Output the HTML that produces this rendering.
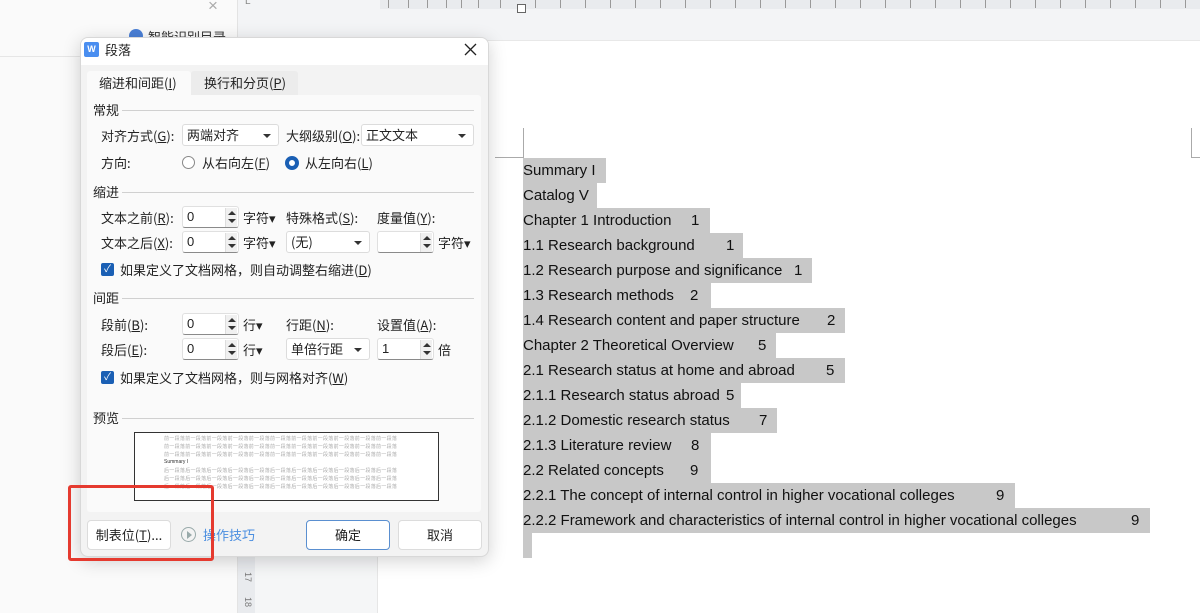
<!DOCTYPE html>
<html><head><meta charset="utf-8"><style>
*{margin:0;padding:0;box-sizing:border-box}
body{width:1200px;height:613px;overflow:hidden;background:#fff;position:relative;font-family:"Liberation Sans","Noto Sans CJK SC",sans-serif;font-size:13px;color:#222}
.a{position:absolute}
.cn{font-family:"Noto Sans CJK SC","WenQuanYi Zen Hei",sans-serif}
.row{position:absolute;left:523px;height:25px;background:#c8c8c8;font-size:15px;line-height:26px;color:#111;white-space:nowrap}
.row span{position:absolute;top:0}
.lbl{position:absolute;font-size:13px;line-height:18px;white-space:nowrap}
.inp{position:absolute;height:22px;background:#fff;border:1px solid #e0e0e0;border-bottom:1px solid #8a8a8a;border-radius:3px;font-size:13px;line-height:20px;padding-left:4px}
.sel{position:absolute;height:22px;background:#fff;border:1px solid #dcdcdc;border-radius:3px;font-size:13px;line-height:20px;padding-left:4px}
.sel:after{content:"";position:absolute;right:7px;top:9px;border-left:4px solid transparent;border-right:4px solid transparent;border-top:4px solid #333}
.spin{position:absolute;right:1px;top:1px;width:12px;height:19px;background:#f0f0f0;border-left:1px solid #ddd}
.spin:before{content:"";position:absolute;left:2px;top:3px;border-left:4px solid transparent;border-right:4px solid transparent;border-bottom:4px solid #333}
.spin:after{content:"";position:absolute;left:2px;top:11px;border-left:4px solid transparent;border-right:4px solid transparent;border-top:4px solid #333}
.sec{position:absolute;left:93px;font-size:13px;line-height:16px}
.line{position:absolute;height:1px;background:#d0d0d0}
.chk{position:absolute;width:13px;height:13px;background:#1a5fb4;border-radius:2px;color:#fff;font-size:10px;line-height:13px;text-align:center}
.btn{position:absolute;height:30px;background:#fff;border:1px solid #dcdcdc;border-radius:4px;font-size:13px;line-height:28px;text-align:center}
.pv{font-size:5px;color:#aaa;line-height:8px;white-space:nowrap;letter-spacing:.3px}
</style></head><body>
<div class="a" style="left:0;top:0;width:237px;height:613px;background:#fafafa"></div>
<div class="a" style="left:0;top:56px;width:237px;height:1px;background:#e6e6e6"></div>
<div class="a" style="left:208px;top:-4px;font-size:17px;color:#aaa">×</div>
<div class="a" style="left:129px;top:29px;width:14px;height:14px;border-radius:7px;background:#4a7fd6"></div>
<div class="a cn" style="left:148px;top:27px;font-size:13px;color:#333">智能识别目录</div>
<div class="a" style="left:237px;top:0;width:1px;height:613px;background:#e3e3e3"></div>
<div class="a" style="left:238px;top:0;width:962px;height:40px;background:#f3f4f6"></div>
<div class="a" style="left:238px;top:40px;width:962px;height:1px;background:#e8e8e8"></div>
<div class="a" style="left:380px;top:0;width:820px;height:9px;background:#e9ebee"></div>
<div class="a" style="left:245px;top:-4px;font-size:10px;color:#888">L</div>
<svg class="a" style="left:380px;top:0" width="820" height="10">
<g stroke="#999" stroke-width="1">
<line x1="8.5" y1="0" x2="8.5" y2="8"/><line x1="28.5" y1="0" x2="28.5" y2="8"/><line x1="47.5" y1="0" x2="47.5" y2="8"/><line x1="66.5" y1="0" x2="66.5" y2="8"/><line x1="81.5" y1="0" x2="81.5" y2="8"/><line x1="98.5" y1="0" x2="98.5" y2="8"/><line x1="120.5" y1="0" x2="120.5" y2="8"/><line x1="155.5" y1="0" x2="155.5" y2="8"/><line x1="180.5" y1="0" x2="180.5" y2="8"/><line x1="205.5" y1="0" x2="205.5" y2="8"/><line x1="230.5" y1="0" x2="230.5" y2="8"/><line x1="255.5" y1="0" x2="255.5" y2="8"/><line x1="280.5" y1="0" x2="280.5" y2="8"/><line x1="305.5" y1="0" x2="305.5" y2="8"/><line x1="330.5" y1="0" x2="330.5" y2="8"/><line x1="355.5" y1="0" x2="355.5" y2="8"/><line x1="380.5" y1="0" x2="380.5" y2="8"/><line x1="405.5" y1="0" x2="405.5" y2="8"/><line x1="430.5" y1="0" x2="430.5" y2="8"/><line x1="455.5" y1="0" x2="455.5" y2="8"/><line x1="480.5" y1="0" x2="480.5" y2="8"/><line x1="505.5" y1="0" x2="505.5" y2="8"/><line x1="530.5" y1="0" x2="530.5" y2="8"/><line x1="555.5" y1="0" x2="555.5" y2="8"/><line x1="580.5" y1="0" x2="580.5" y2="8"/><line x1="605.5" y1="0" x2="605.5" y2="8"/><line x1="630.5" y1="0" x2="630.5" y2="8"/><line x1="655.5" y1="0" x2="655.5" y2="8"/><line x1="680.5" y1="0" x2="680.5" y2="8"/><line x1="705.5" y1="0" x2="705.5" y2="8"/><line x1="730.5" y1="0" x2="730.5" y2="8"/><line x1="755.5" y1="0" x2="755.5" y2="8"/><line x1="780.5" y1="0" x2="780.5" y2="8"/><line x1="805.5" y1="0" x2="805.5" y2="8"/>
</g></svg>
<div class="a" style="left:517px;top:4px;width:9px;height:9px;border:1px solid #666;background:#fff"></div>
<div class="a" style="left:238px;top:41px;width:17px;height:572px;background:#e9ebee"></div>
<div class="a" style="left:255px;top:41px;width:123px;height:572px;background:#f5f6f7"></div>
<div class="a" style="left:377px;top:41px;width:1px;height:572px;background:#e6e6e6"></div>
<div class="a" style="left:243px;top:572px;font-size:9px;color:#777;transform:rotate(90deg)">17</div>
<div class="a" style="left:243px;top:597px;font-size:9px;color:#777;transform:rotate(90deg)">18</div>
<div class="a" style="left:523px;top:128px;width:1px;height:30px;background:#aaa"></div>
<div class="a" style="left:495px;top:157px;width:28px;height:1px;background:#aaa"></div>
<div class="a" style="left:1191px;top:128px;width:1px;height:30px;background:#aaa"></div>
<div class="a" style="left:1191px;top:157px;width:9px;height:1px;background:#aaa"></div>
<div class="row" style="top:158px;width:83px">Summary I</div>
<div class="row" style="top:183px;width:74px">Catalog V</div>
<div class="row" style="top:208px;width:187px">Chapter 1 Introduction<span style="left:168px">1</span></div>
<div class="row" style="top:233px;width:220px">1.1 Research background<span style="left:203px">1</span></div>
<div class="row" style="top:258px;width:289px">1.2 Research purpose and significance<span style="left:271px">1</span></div>
<div class="row" style="top:283px;width:188px">1.3 Research methods<span style="left:167px">2</span></div>
<div class="row" style="top:308px;width:322px">1.4 Research content and paper structure<span style="left:304px">2</span></div>
<div class="row" style="top:333px;width:253px">Chapter 2 Theoretical Overview<span style="left:235px">5</span></div>
<div class="row" style="top:358px;width:322px">2.1 Research status at home and abroad<span style="left:303px">5</span></div>
<div class="row" style="top:383px;width:218px">2.1.1 Research status abroad<span style="left:203px">5</span></div>
<div class="row" style="top:408px;width:254px">2.1.2 Domestic research status<span style="left:236px">7</span></div>
<div class="row" style="top:433px;width:188px">2.1.3 Literature review<span style="left:168px">8</span></div>
<div class="row" style="top:458px;width:188px">2.2 Related concepts<span style="left:167px">9</span></div>
<div class="row" style="top:483px;width:492px">2.2.1 The concept of internal control in higher vocational colleges<span style="left:473px">9</span></div>
<div class="row" style="top:508px;width:627px">2.2.2 Framework and characteristics of internal control in higher vocational colleges<span style="left:608px">9</span></div>
<div class="row" style="top:533px;width:9px"></div>

<div class="a" style="left:80px;top:37px;width:409px;height:520px;background:#f3f3f3;border:1px solid #d8d8d8;border-radius:8px;box-shadow:0 4px 18px rgba(0,0,0,.18);overflow:hidden">
 <div class="a" style="left:0;top:0;width:409px;height:27px;background:#fff"></div>
</div>
<div class="a" style="left:84px;top:42px;width:15px;height:15px;background:#4a8ef0;border-radius:2px;color:#fff;font-size:9px;font-weight:bold;line-height:15px;text-align:center">W</div>
<div class="lbl cn" style="left:105px;top:41px;font-size:13px">段落</div>
<svg class="a" style="left:464px;top:43px" width="13" height="13"><path d="M1 1L12 12M12 1L1 12" stroke="#222" stroke-width="1.3"/></svg>
<div class="a" style="left:87px;top:71px;width:104px;height:26px;background:#fafafa;border-radius:3px 3px 0 0"></div>
<div class="a" style="left:191px;top:71px;width:107px;height:24px;background:#ececec;border-radius:3px 3px 0 0"></div>
<div class="lbl cn" style="left:99px;top:74px">缩进和间距(<u>I</u>)</div>
<div class="lbl cn" style="left:204px;top:74px">换行和分页(<u>P</u>)</div>
<div class="a" style="left:87px;top:95px;width:394px;height:417px;background:#fafafa;border-radius:0 3px 3px 3px"></div>

<div class="sec cn" style="top:102px">常规</div><div class="line" style="left:122px;top:110px;width:352px"></div>
<div class="lbl cn" style="left:101px;top:127px">对齐方式(<u>G</u>):</div>
<div class="sel cn" style="left:182px;top:124px;width:97px">两端对齐</div>
<div class="lbl cn" style="left:286px;top:127px">大纲级别(<u>O</u>):</div>
<div class="sel cn" style="left:361px;top:124px;width:113px">正文文本</div>
<div class="lbl cn" style="left:101px;top:154px">方向:</div>
<div class="a" style="left:182px;top:156px;width:13px;height:13px;border:1px solid #888;border-radius:50%;background:#fff"></div>
<div class="lbl cn" style="left:202px;top:154px">从右向左(<u>F</u>)</div>
<div class="a" style="left:285px;top:156px;width:14px;height:14px;border:4px solid #1a5fb4;border-radius:50%;background:#fff"></div>
<div class="lbl cn" style="left:305px;top:154px">从左向右(<u>L</u>)</div>

<div class="sec cn" style="top:184px">缩进</div><div class="line" style="left:122px;top:192px;width:352px"></div>
<div class="lbl cn" style="left:101px;top:209px">文本之前(<u>R</u>):</div>
<div class="inp" style="left:182px;top:206px;width:57px">0<div class="spin"></div></div>
<div class="lbl cn" style="left:243px;top:209px">字符▾</div>
<div class="lbl cn" style="left:286px;top:209px">特殊格式(<u>S</u>):</div>
<div class="lbl cn" style="left:377px;top:209px">度量值(<u>Y</u>):</div>
<div class="lbl cn" style="left:101px;top:234px">文本之后(<u>X</u>):</div>
<div class="inp" style="left:182px;top:231px;width:57px">0<div class="spin"></div></div>
<div class="lbl cn" style="left:243px;top:234px">字符▾</div>
<div class="sel cn" style="left:286px;top:231px;width:84px">(无)</div>
<div class="inp" style="left:377px;top:231px;width:57px"><div class="spin"></div></div>
<div class="lbl cn" style="left:438px;top:234px">字符▾</div>
<div class="chk" style="left:101px;top:263px">✓</div>
<div class="lbl cn" style="left:120px;top:261px">如果定义了文档网格，则自动调整右缩进(<u>D</u>)</div>

<div class="sec cn" style="top:290px">间距</div><div class="line" style="left:122px;top:298px;width:352px"></div>
<div class="lbl cn" style="left:101px;top:316px">段前(<u>B</u>):</div>
<div class="inp" style="left:182px;top:313px;width:57px">0<div class="spin"></div></div>
<div class="lbl cn" style="left:243px;top:316px">行▾</div>
<div class="lbl cn" style="left:286px;top:316px">行距(<u>N</u>):</div>
<div class="lbl cn" style="left:377px;top:316px">设置值(<u>A</u>):</div>
<div class="lbl cn" style="left:101px;top:341px">段后(<u>E</u>):</div>
<div class="inp" style="left:182px;top:338px;width:57px">0<div class="spin"></div></div>
<div class="lbl cn" style="left:243px;top:341px">行▾</div>
<div class="sel cn" style="left:286px;top:338px;width:84px">单倍行距</div>
<div class="inp" style="left:377px;top:338px;width:57px">1<div class="spin"></div></div>
<div class="lbl cn" style="left:438px;top:341px">倍</div>
<div class="chk" style="left:101px;top:371px">✓</div>
<div class="lbl cn" style="left:120px;top:369px">如果定义了文档网格，则与网格对齐(<u>W</u>)</div>

<div class="sec cn" style="top:410px">预览</div><div class="line" style="left:122px;top:418px;width:352px"></div>
<div class="a" style="left:134px;top:432px;width:305px;height:69px;border:1px solid #333;background:#fff;overflow:hidden">
 <div class="a cn pv" style="left:29px;top:2px">前一段落前一段落前一段落前一段落前一段落前一段落前一段落前一段落前一段落前一段落前一段落<br>前一段落前一段落前一段落前一段落前一段落前一段落前一段落前一段落前一段落前一段落前一段落<br>前一段落前一段落前一段落前一段落前一段落前一段落前一段落前一段落前一段落前一段落前一段落</div>
 <div class="a" style="left:29px;top:26px;font-size:5px;color:#333">Summary I</div>
 <div class="a cn pv" style="left:29px;top:34px">后一段落后一段落后一段落后一段落后一段落后一段落后一段落后一段落后一段落后一段落后一段落<br>后一段落后一段落后一段落后一段落后一段落后一段落后一段落后一段落后一段落后一段落后一段落<br>后一段落后一段落后一段落后一段落后一段落后一段落后一段落后一段落后一段落后一段落后一段落</div>
</div>

<div class="btn cn" style="left:87px;top:520px;width:84px">制表位(<u>T</u>)...</div>
<div class="a" style="left:181px;top:527px;width:15px;height:15px;border:1.5px solid #9aa;border-radius:50%"></div>
<div class="a" style="left:187px;top:531px;border-top:4px solid transparent;border-bottom:4px solid transparent;border-left:5px solid #9aa"></div>
<div class="lbl cn" style="left:203px;top:526px;color:#4a8ee0">操作技巧</div>
<div class="btn cn" style="left:306px;top:520px;width:84px;border-color:#5a8fd0">确定</div>
<div class="btn cn" style="left:398px;top:520px;width:84px">取消</div>

<div class="a" style="left:68px;top:485px;width:146px;height:76px;border:3px solid #e53a2f;border-radius:3px"></div>
</body></html>
